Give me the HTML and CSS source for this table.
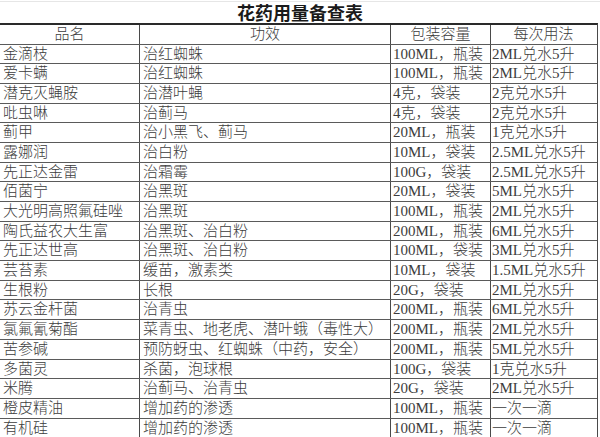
FILE: index.html
```html
<!DOCTYPE html>
<html lang="zh-CN">
<head>
<meta charset="utf-8">
<title>花药用量备查表</title>
<link rel="stylesheet" href="styles.css">
</head>
<body>
<div class="sheet">
  <div class="title">花药用量备查表</div>
  <div class="table">
    <div class="row head"><div class="c c1">品名</div><div class="c c2">功效</div><div class="c c3">包装容量</div><div class="c c4">每次用法</div></div>
    <div class="row"><div class="c c1">金滴枝</div><div class="c c2">治红蜘蛛</div><div class="c c3">100ML，瓶装</div><div class="c c4">2ML兑水5升</div></div>
    <div class="row"><div class="c c1">爱卡螨</div><div class="c c2">治红蜘蛛</div><div class="c c3">100ML，瓶装</div><div class="c c4">2ML兑水5升</div></div>
    <div class="row"><div class="c c1">潜克灭蝇胺</div><div class="c c2">治潜叶蝇</div><div class="c c3">4克，袋装</div><div class="c c4">2克兑水5升</div></div>
    <div class="row"><div class="c c1">吡虫啉</div><div class="c c2">治蓟马</div><div class="c c3">4克，袋装</div><div class="c c4">2克兑水5升</div></div>
    <div class="row"><div class="c c1">蓟甲</div><div class="c c2">治小黑飞、蓟马</div><div class="c c3">20ML，瓶装</div><div class="c c4">1克兑水5升</div></div>
    <div class="row"><div class="c c1">露娜润</div><div class="c c2">治白粉</div><div class="c c3">10ML，袋装</div><div class="c c4">2.5ML兑水5升</div></div>
    <div class="row"><div class="c c1">先正达金雷</div><div class="c c2">治霜霉</div><div class="c c3">100G，袋装</div><div class="c c4">2.5ML兑水5升</div></div>
    <div class="row"><div class="c c1">佰菌宁</div><div class="c c2">治黑斑</div><div class="c c3">20ML，袋装</div><div class="c c4">5ML兑水5升</div></div>
    <div class="row"><div class="c c1">大光明高照氟硅唑</div><div class="c c2">治黑斑</div><div class="c c3">100ML，瓶装</div><div class="c c4">2ML兑水5升</div></div>
    <div class="row"><div class="c c1">陶氏益农大生富</div><div class="c c2">治黑斑、治白粉</div><div class="c c3">200ML，瓶装</div><div class="c c4">6ML兑水5升</div></div>
    <div class="row"><div class="c c1">先正达世高</div><div class="c c2">治黑斑、治白粉</div><div class="c c3">100ML，袋装</div><div class="c c4">3ML兑水5升</div></div>
    <div class="row"><div class="c c1">芸苔素</div><div class="c c2">缓苗，激素类</div><div class="c c3">10ML，袋装</div><div class="c c4">1.5ML兑水5升</div></div>
    <div class="row"><div class="c c1">生根粉</div><div class="c c2">长根</div><div class="c c3">20G，袋装</div><div class="c c4">2ML兑水5升</div></div>
    <div class="row"><div class="c c1">苏云金杆菌</div><div class="c c2">治青虫</div><div class="c c3">200ML，瓶装</div><div class="c c4">6ML兑水5升</div></div>
    <div class="row"><div class="c c1">氯氟氰菊酯</div><div class="c c2">菜青虫、地老虎、潜叶蛾（毒性大）</div><div class="c c3">200ML，瓶装</div><div class="c c4">2ML兑水5升</div></div>
    <div class="row"><div class="c c1">苦参碱</div><div class="c c2">预防蚜虫、红蜘蛛（中药，安全）</div><div class="c c3">200ML，瓶装</div><div class="c c4">5ML兑水5升</div></div>
    <div class="row"><div class="c c1">多菌灵</div><div class="c c2">杀菌，泡球根</div><div class="c c3">100G，袋装</div><div class="c c4">1克兑水5升</div></div>
    <div class="row"><div class="c c1">米腾</div><div class="c c2">治蓟马、治青虫</div><div class="c c3">20G，袋装</div><div class="c c4">2ML兑水5升</div></div>
    <div class="row"><div class="c c1">橙皮精油</div><div class="c c2">增加药的渗透</div><div class="c c3">100ML，瓶装</div><div class="c c4">一次一滴</div></div>
    <div class="row"><div class="c c1">有机硅</div><div class="c c2">增加药的渗透</div><div class="c c3">100ML，瓶装</div><div class="c c4">一次一滴</div></div>
  </div>
</div>
</body>
</html>
```

FILE: styles.css
```css
html, body {
  margin: 0;
  padding: 0;
  background: #ffffff;
}

.sheet {
  width: 600px;
  height: 437px;
  overflow: hidden;
  font-family: "Liberation Serif", "Noto Sans CJK SC", serif;
  color: #3c3c3c;
}

.title {
  height: 21px;
  margin-top: 1px;
  border-top: 1px solid #e6e6e6;
  text-align: center;
  font-family: "Noto Sans CJK SC", sans-serif;
  font-weight: 700;
  font-size: 18px;
  line-height: 21px;
  color: #1a1a1a;
}

.table {
  width: 597px;
  border-top: 2px solid #2a2a2a;
  border-right: 1px solid #4a4a4a;
}

.row {
  display: grid;
  grid-template-columns: 140px 251px 100px 105px;
  height: 19.7px;
  box-sizing: border-box;
  border-bottom: 1px solid #5a5a5a;
}

.row.head {
  height: 19.5px;
}

.c {
  font-size: 15px;
  line-height: 19px;
  white-space: nowrap;
  overflow: hidden;
  font-weight: 300;
}

.c1 {
  padding-left: 3px;
  border-right: 1px solid #4a4a4a;
}

.c2 {
  padding-left: 3px;
  border-right: 1px solid #4a4a4a;
}

.c3 {
  padding-left: 2px;
  border-right: 1px solid #4a4a4a;
}

.c4 {
  padding-left: 1px;
}

.head .c {
  text-align: center;
  padding-left: 0;
}
```
